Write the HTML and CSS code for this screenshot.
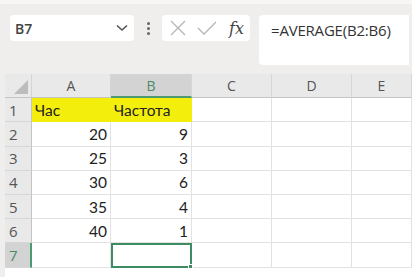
FILE: index.html
```html
<!DOCTYPE html>
<html lang="en">
    <head>
        <meta charset="UTF-8">
        <title>Excel</title>
        <link rel="stylesheet" href="styles.css">
    </head>
    <body>
        <!-- строка формул -->
        <div class="toolbar">
            <div class="namebox">
                <span class="cellref">B7</span>
                <svg class="chev" width="12" height="8" viewBox="0 0 12 8"><path d="M1 1.5 L6 6 L11 1.5" fill="none" stroke="#555" stroke-width="1.6"/></svg>
            </div>
            <div class="dots"><i></i><i></i><i></i></div>
            <div class="btns">
                <svg width="18" height="18" viewBox="0 0 18 18"><path d="M2 2 L16 16 M16 2 L2 16" stroke="#b5b5b5" stroke-width="1.3"/></svg>
                <svg width="20" height="18" viewBox="0 0 20 18"><path d="M1 9 L7 15 L19 3" fill="none" stroke="#b5b5b5" stroke-width="1.3"/></svg>
                <span class="fx">fx</span>
            </div>
            <div class="formula">=AVERAGE(B2:B6)</div>
        </div>
        <!-- таблица -->
        <div class="sheet">
            <div class="corner"></div>
            <div class="colh">A</div>
            <div class="colh sel">B</div>
            <div class="colh">C</div>
            <div class="colh">D</div>
            <div class="colh">E</div>

            <div class="rowh">1</div>
            <div class="cell yel">Час</div>
            <div class="cell yel">Частота</div>
            <div class="cell"></div><div class="cell"></div><div class="cell"></div>

            <div class="rowh">2</div>
            <div class="cell num">20</div><div class="cell num">9</div>
            <div class="cell"></div><div class="cell"></div><div class="cell"></div>

            <div class="rowh">3</div>
            <div class="cell num">25</div><div class="cell num">3</div>
            <div class="cell"></div><div class="cell"></div><div class="cell"></div>

            <div class="rowh">4</div>
            <div class="cell num">30</div><div class="cell num">6</div>
            <div class="cell"></div><div class="cell"></div><div class="cell"></div>

            <div class="rowh">5</div>
            <div class="cell num">35</div><div class="cell num">4</div>
            <div class="cell"></div><div class="cell"></div><div class="cell"></div>

            <div class="rowh">6</div>
            <div class="cell num">40</div><div class="cell num">1</div>
            <div class="cell"></div><div class="cell"></div><div class="cell"></div>

            <div class="rowh sel">7</div>
            <div class="cell"></div>
            <div class="cell active"><span class="handle"></span></div>
            <div class="cell"></div><div class="cell"></div><div class="cell"></div>
        </div>
    </body>
</html>
```

FILE: styles.css
```css
*{
    margin: 0;
    padding: 0;
    box-sizing: border-box;
}
body{
    width: 412px;
    height: 277px;
    background-color: #f0eeec;
    font-family: "Open Sans", sans-serif;
    overflow: hidden;
    border-top: 4px solid #f7f6f5;
}
.toolbar{
    display: flex;
    align-items: flex-start;
    padding: 11px 0 0 10px;
    height: 70px;
}
.namebox{
    width: 124px;
    height: 26px;
    background-color: #fff;
    border-radius: 4px;
    display: flex;
    align-items: center;
    justify-content: space-between;
    padding: 0 6px 0 5px;
}
.cellref{
    font-size: 14px;
    font-weight: 600;
    color: #444;
}
.dots{
    width: 28px;
    height: 26px;
    display: flex;
    flex-direction: column;
    align-items: center;
    justify-content: center;
    gap: 2px;
}
.dots i{
    display: block;
    width: 3px;
    height: 3px;
    border-radius: 50%;
    background-color: #666;
}
.btns{
    width: 88px;
    height: 26px;
    background-color: #fff;
    border-radius: 4px;
    display: flex;
    align-items: center;
    padding: 0 0 0 7px;
    gap: 10px;
}
.fx{
    font-family: "DejaVu Serif", serif;
    font-style: italic;
    font-size: 16px;
    color: #444;
    margin-left: 2px;
}
.formula{
    margin-left: 9px;
    width: 150px;
    height: 50px;
    background-color: #fff;
    border-radius: 4px 0 0 4px;
    padding: 5px 0 0 12px;
    font-size: 15px;
    color: #333;
    letter-spacing: -0.2px;
    white-space: nowrap;
}
.sheet{
    display: grid;
    grid-template-columns: 27px 79px 81px 80px 80px 60px;
    grid-auto-rows: 24.2px;
    padding-left: 5px;
    background: linear-gradient(#fff, #fff) 5px 0 / 100% 100% no-repeat;
    height: 207px;
}
.corner, .colh, .rowh{
    background-color: #e9e9e9;
    color: #555;
    font-size: 14px;
}
.corner{
    position: relative;
    border-right: 1px solid #d4d4d4;
    border-bottom: 1px solid #c4c4c4;
}
.corner:after{
    content: "";
    position: absolute;
    right: 3px;
    bottom: 3px;
    border-style: solid;
    border-width: 0 0 14px 14px;
    border-color: transparent transparent #bcbcbc transparent;
}
.colh{
    display: flex;
    align-items: center;
    justify-content: center;
    border-right: 1px solid #d6d6d6;
    border-bottom: 1px solid #c4c4c4;
}
.colh.sel{
    background-color: #d3d3d3;
    color: #4c8a68;
    border-bottom: 2px solid #4c9a6f;
}
.rowh{
    display: flex;
    align-items: center;
    padding-left: 4px;
    font-size: 15px;
    border-right: 1px solid #c4c4c4;
    border-bottom: 1px solid #d6d6d6;
}
.rowh.sel{
    background-color: #d3d3d3;
    color: #4c8a68;
    border-right: 2px solid #4c9a6f;
}
.cell{
    font-family: Lato, sans-serif;
    font-size: 15.5px;
    color: #222;
    display: flex;
    align-items: center;
    padding: 0 3px;
    border-right: 1px solid #e2e2e2;
    border-bottom: 1px solid #e2e2e2;
}
.num{
    justify-content: flex-end;
}
.yel{
    background-color: #f3ee0c;
    border-color: #f3ee0c;
}
.active{
    position: relative;
    border: 2px solid #3e8c62;
}
.handle{
    position: absolute;
    right: -3px;
    bottom: -3px;
    width: 5px;
    height: 5px;
    background-color: #3e8c62;
    border: 1px solid #fff;
}
```
